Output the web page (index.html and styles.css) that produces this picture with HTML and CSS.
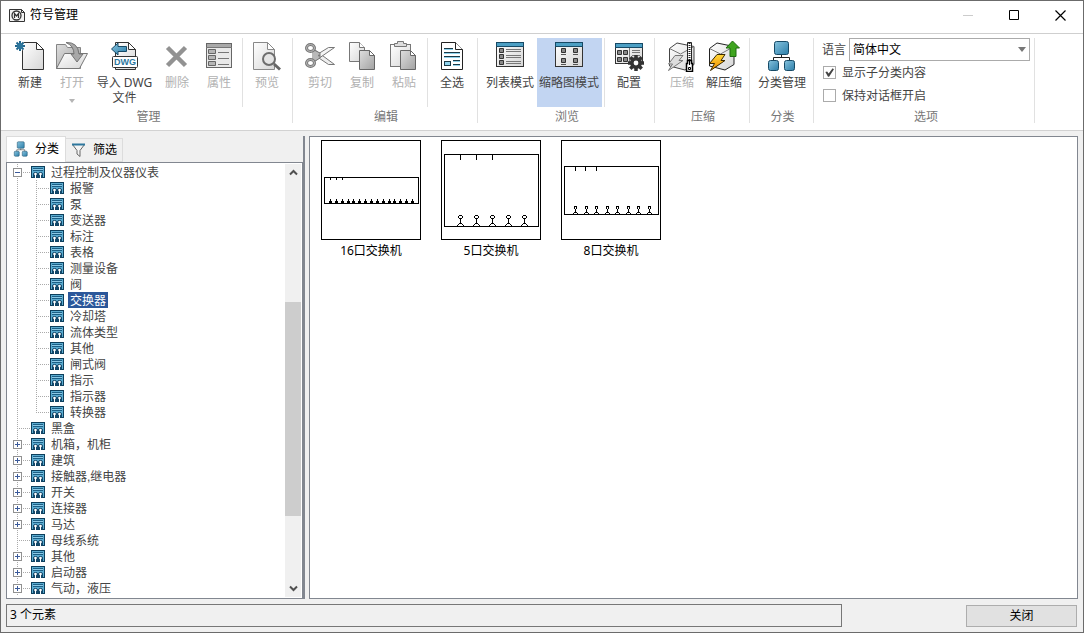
FILE: index.html
```html
<!DOCTYPE html>
<html lang="zh-CN">
<head>
    <meta charset="UTF-8">
    <meta name="viewport" content="width=device-width, initial-scale=1.0">
    <title>符号管理</title>
    <link rel="stylesheet" href="styles.css">
</head>
<body>
    <!-- shared gradients and symbols -->
    <svg class="defs" width="0" height="0" aria-hidden="true">
        <defs>
            <linearGradient id="paper" x1="0" y1="0" x2="1" y2="1">
                <stop offset="0" stop-color="#ffffff"/>
                <stop offset="1" stop-color="#d6d6d6"/>
            </linearGradient>
            <linearGradient id="gray" x1="0" y1="0" x2="1" y2="1">
                <stop offset="0" stop-color="#dedede"/>
                <stop offset="1" stop-color="#a2a2a2"/>
            </linearGradient>
            <linearGradient id="blue" x1="0" y1="0" x2="1" y2="1">
                <stop offset="0" stop-color="#86c3de"/>
                <stop offset="1" stop-color="#2c7ea9"/>
            </linearGradient>
            <linearGradient id="bolt" x1="0" y1="0" x2="0" y2="1">
                <stop offset="0" stop-color="#ffd83a"/>
                <stop offset="1" stop-color="#f08a00"/>
            </linearGradient>
        </defs>
        <symbol id="cat" viewBox="0 0 14 12">
            <rect x="0.5" y="0.5" width="13" height="11" fill="#5aabd0" stroke="#0e3f5c"/>
            <path d="M2 2.500h10M2 4.500h10" stroke="#1c5f85"/>
            <path d="M2 3.500h10" stroke="#8cc9e6"/>
            <path d="M2 11.500V7.500L3.500 6h2L7 7.500 8.500 6h2L12 7.500v4z" fill="#12486a"/>
            <path d="M4.500 8v4M9.500 8v4" stroke="#fff"/>
            <circle cx="4.500" cy="8" r="1.300" fill="#fff"/>
            <circle cx="9.500" cy="8" r="1.300" fill="#fff"/>
        </symbol>
        <symbol id="nodes" viewBox="0 0 32 32">
            <path d="M15.500 15v3M7.500 21v-3.500h16V21" fill="none" stroke="#222"/>
            <rect x="8.500" y="1.500" width="14" height="13" rx="2" fill="url(#blue)" stroke="#174a66"/>
            <rect x="2.500" y="20.500" width="10" height="10" rx="2" fill="url(#blue)" stroke="#174a66"/>
            <rect x="18.500" y="20.500" width="10" height="10" rx="2" fill="url(#blue)" stroke="#174a66"/>
        </symbol>
        <symbol id="port" viewBox="0 0 8 11" overflow="visible">
            <path d="M2 0.500h3M1.500 1v2M5.500 1v2M2 3.500h3M3.500 4v4M2 8.500h3M1.500 9v1M5.500 9v1M0.500 10v1M6.500 10v1" fill="none" stroke="#000"/>
        </symbol>
        <symbol id="port-mid" viewBox="0 0 6 8" overflow="visible">
            <path d="M1 0.500h3M1.500 1v2M3.500 1v2M2.500 3v3M1 6.500h3M0.500 7v1M4.500 7v1" fill="none" stroke="#000"/>
        </symbol>
        <symbol id="port-small" viewBox="0 0 4 4" overflow="visible">
            <path d="M1 0.500h1M0 2.500h3M0 3.500h3M1.500 0v4" fill="none" stroke="#000"/>
        </symbol>
    </svg>

    <header class="titlebar">
        <svg class="app-icon" width="16" height="13" viewBox="0 0 16 13">
            <path d="M0.500 0.500h12l3 3v9h-15z" fill="#f2f2f2" stroke="#333"/>
            <path d="M12.500 0.500v3h3" fill="none" stroke="#333"/>
            <circle cx="7.500" cy="6.500" r="4.500" fill="#fff" stroke="#333" stroke-width="1.300"/>
            <path d="M5.500 9V4.500l2 2.500 2-2.500V9" fill="none" stroke="#333" stroke-width="1.300"/>
        </svg>
        <h1>符号管理</h1>
        <button class="win-btn" aria-label="最小化" disabled>
            <svg width="11" height="11"><path d="M0 5.500h10" stroke="#ccc"/></svg>
        </button>
        <button class="win-btn" aria-label="最大化">
            <svg width="11" height="11"><path d="M0.500 0.500h9v9h-9z" fill="none" stroke="#000"/></svg>
        </button>
        <button class="win-btn" aria-label="关闭窗口">
            <svg width="11" height="11"><path d="M0.500 0.500l10 10M10.500 0.500l-10 10" stroke="#000" stroke-width="1.200"/></svg>
        </button>
    </header>

    <nav class="ribbon">
        <section class="group">
            <div class="tools">
                <button class="tool">
                    <svg width="32" height="32">
                        <path d="M8.500 2.500h14l7 7v20h-21z" fill="url(#paper)" stroke="#333"/>
                        <path d="M22.500 2.500v7h7z" fill="#fff" stroke="#333"/>
                        <circle cx="6" cy="6" r="5" fill="#fff"/>
                        <path d="M6 1v10M1 6h10M2.500 2.500l7 7M9.500 2.500l-7 7" stroke="#24688e" stroke-width="2"/>
                        <circle cx="6" cy="6" r="3" fill="#2c769d"/>
                    </svg>
                    <span>新建</span>
                </button>
                <button class="tool" disabled>
                    <svg width="32" height="32">
                        <path d="M0.500 28.500V4.500h9l2 3h13v21z" fill="url(#gray)" stroke="#858585"/>
                        <path d="M0.500 28.500l8-15h23l-8 15z" fill="url(#paper)" stroke="#777"/>
                        <path d="M10 2.500Q22 2 23 14h4l-6 8-6-8h3Q18 6 10 2.500z" fill="#a8a8a8" stroke="#747474"/>
                    </svg>
                    <span>打开</span>
                    <svg class="more" width="6" height="4"><path d="M0 0h6L3 4z" fill="#b5b5b5"/></svg>
                </button>
                <button class="tool wide">
                    <svg width="32" height="32">
                        <path d="M6.500 29.500v-27h13l7 7v20z" fill="url(#paper)" stroke="#333"/>
                        <path d="M19.500 2.500v7h7z" fill="#fff" stroke="#333"/>
                        <path d="M2.500 9L9 3v3.500h8.500v5H9V15z" fill="url(#blue)" stroke="#174a66"/>
                        <rect x="3.500" y="16.500" width="25" height="11" rx="1" fill="#fff" stroke="#333"/>
                        <text class="icon-text" x="16" y="25" text-anchor="middle">DWG</text>
                    </svg>
                    <span>导入 DWG<br>文件</span>
                </button>
                <button class="tool" disabled>
                    <svg width="32" height="32">
                        <path d="M6.500 7.500l18 18M24.500 7.500l-18 18" stroke="#929292" stroke-width="4.500"/>
                    </svg>
                    <span>删除</span>
                </button>
                <button class="tool" disabled>
                    <svg width="32" height="32">
                        <rect x="3.500" y="3.500" width="25" height="24" fill="#e9e9e9" stroke="#666"/>
                        <rect x="4" y="4" width="24" height="3" fill="#a9a9a9"/>
                        <path d="M3 7.500h26M15 12.500h11M15 18.500h11M15 24.500h11" stroke="#777"/>
                        <path d="M5.500 9.500h7v4h-7zM5.500 15.500h7v4h-7zM5.500 21.500h7v4h-7z" fill="#b5b5b5" stroke="#666"/>
                    </svg>
                    <span>属性</span>
                </button>
                <span class="sep"></span>
                <button class="tool" disabled>
                    <svg width="32" height="32">
                        <path d="M2.500 2.500h14l7 7v20h-21z" fill="url(#paper)" stroke="#888"/>
                        <path d="M16.500 2.500v7h7z" fill="#fff" stroke="#888"/>
                        <path d="M23 24l6 5.500" stroke="#666" stroke-width="3"/>
                        <circle cx="18" cy="19" r="6" fill="#e4e4e4" stroke="#6d6d6d" stroke-width="2"/>
                    </svg>
                    <span>预览</span>
                </button>
            </div>
            <h2>管理</h2>
        </section>

        <section class="group">
            <div class="tools">
                <button class="tool" disabled>
                    <svg width="32" height="32">
                        <path d="M11 10L30.500 24.500h-6L9 14z" fill="#eee" stroke="#777"/>
                        <path d="M11 21L30.500 7.500h-6L9 17z" fill="#f5f5f5" stroke="#777"/>
                        <path d="M8 9l8 4v5l-8 5" fill="#b9b9b9" stroke="#777"/>
                        <ellipse cx="6.500" cy="8" rx="4" ry="3.500" fill="#fff" stroke="#777" stroke-width="3"/>
                        <ellipse cx="6.500" cy="8" rx="4" ry="3.500" fill="none" stroke="#bbb"/>
                        <ellipse cx="6.500" cy="23" rx="4" ry="3.500" fill="#fff" stroke="#777" stroke-width="3"/>
                        <ellipse cx="6.500" cy="23" rx="4" ry="3.500" fill="none" stroke="#bbb"/>
                        <circle cx="15" cy="15.500" r="1" fill="#777"/>
                    </svg>
                    <span>剪切</span>
                </button>
                <button class="tool" disabled>
                    <svg width="32" height="32">
                        <path d="M3.500 2.500h10l5 5v14h-15z" fill="url(#paper)" stroke="#777"/>
                        <path d="M13.500 2.500v5h5" fill="#fff" stroke="#777"/>
                        <path d="M13.500 10.500h10l5 5v14h-15z" fill="url(#gray)" stroke="#666"/>
                        <path d="M23.500 10.500v5h5z" fill="#fff" stroke="#666"/>
                    </svg>
                    <span>复制</span>
                </button>
                <button class="tool" disabled>
                    <svg width="32" height="32">
                        <rect x="2.500" y="4.500" width="20" height="22" fill="url(#paper)" stroke="#777"/>
                        <path d="M6.500 6.500v-3h3v-2h6v2h3v3z" fill="#ddd" stroke="#777"/>
                        <path d="M12.500 10.500h10l5 5v14h-15z" fill="url(#gray)" stroke="#666"/>
                        <path d="M22.500 10.500v5h5z" fill="#fff" stroke="#666"/>
                    </svg>
                    <span>粘贴</span>
                </button>
                <span class="sep"></span>
                <button class="tool">
                    <svg width="32" height="32">
                        <path d="M5.500 2.500h14l7 7v20h-21z" fill="#fff" stroke="#222"/>
                        <path d="M19.500 2.500v7h7" fill="#fff" stroke="#222"/>
                        <path d="M8 8.500h9M8 12.500h16M8 16.500h16M17 20.500h7M17 24.500h7" stroke="#1b3946"/>
                        <path d="M8 9.500h9M8 13.500h16M8 17.500h16M17 21.500h7M17 25.500h7" stroke="#8ed1eb"/>
                        <rect x="8.500" y="21.500" width="6" height="4" fill="#8ed1eb" stroke="#1b3946"/>
                    </svg>
                    <span>全选</span>
                </button>
            </div>
            <h2>编辑</h2>
        </section>

        <section class="group">
            <div class="tools">
                <button class="tool fit">
                    <svg width="32" height="32">
                        <rect x="2.500" y="2.500" width="27" height="24" fill="url(#paper)" stroke="#333"/>
                        <rect x="2.500" y="2.500" width="27" height="4" fill="#4c9fc4" stroke="#174a66"/>
                        <path d="M5.500 8.500h4v4h-4zM5.500 14.500h4v4h-4zM5.500 20.500h4v4h-4z" fill="#888" stroke="#333"/>
                        <path d="M12 9.500h15M12 11.500h15M12 15.500h15M12 17.500h15M12 21.500h15M12 23.500h15" stroke="#777"/>
                    </svg>
                    <span>列表模式</span>
                </button>
                <button class="tool fit active" aria-pressed="true">
                    <svg width="32" height="32">
                        <rect x="2.500" y="2.500" width="27" height="24" fill="url(#paper)" stroke="#333"/>
                        <rect x="2.500" y="2.500" width="27" height="4" fill="#4c9fc4" stroke="#174a66"/>
                        <path d="M8.500 8.500h4v4h-4zM20.500 8.500h4v4h-4zM8.500 18.500h4v4h-4zM20.500 18.500h4v4h-4z" fill="#888" stroke="#333"/>
                        <path d="M8 14.500h5M20 14.500h5M8 24.500h5M20 24.500h5" stroke="#555"/>
                    </svg>
                    <span>缩略图模式</span>
                </button>
                <span class="sep"></span>
                <button class="tool">
                    <svg width="32" height="32">
                        <rect x="2.500" y="3.500" width="27" height="20" fill="url(#paper)" stroke="#333"/>
                        <rect x="2.500" y="3.500" width="27" height="4" fill="#4c9fc4" stroke="#174a66"/>
                        <path d="M4.500 10.500h4v4h-4zM10.500 10.500h4v4h-4zM4.500 17.500h4v4h-4zM10.500 17.500h4v4h-4z" fill="#888" stroke="#333"/>
                        <path d="M16.500 8v15M19 10.500h8M19 12.500h8M19 15.500h8" stroke="#777"/>
                        <path d="M23 15v16M15 23h16M17.300 17.300l11.400 11.400M28.700 17.300L17.300 28.700" stroke="#333" stroke-width="3.500"/>
                        <circle cx="23" cy="23" r="4.200" fill="#fff" stroke="#333" stroke-width="3.600"/>
                    </svg>
                    <span>配置</span>
                </button>
            </div>
            <h2>浏览</h2>
        </section>

        <section class="group">
            <div class="tools">
                <button class="tool" disabled>
                    <svg width="32" height="32">
                        <path d="M3.500 8.500L11 3l17 3.500v18L19 30 3.500 26z" fill="url(#paper)" stroke="#444"/>
                        <path d="M3.500 8.500l11 5.500L28 6.500" fill="none" stroke="#777"/>
                        <path d="M9 15.500h8l-4 5h4L2.500 30.500l4-6.500H2.500z" fill="#ddd" stroke="#777"/>
                        <path d="M21.500 2.500h4v18h-4z" fill="#fff" stroke="#222"/>
                        <path d="M23.500 3v17" stroke="#222" stroke-width="2" stroke-dasharray="1 1"/>
                        <path d="M21.500 20.500h4v3h1v8h-6v-8h1z" fill="#fff" stroke="#000" stroke-width="1.500"/>
                        <path d="M23.500 21v4M22.500 27.500h2v2h-2z" fill="none" stroke="#000"/>
                    </svg>
                    <span>压缩</span>
                </button>
                <button class="tool">
                    <svg width="32" height="32">
                        <path d="M1.500 8.500L9 3l17 3.500v18L17 30 1.500 26z" fill="url(#paper)" stroke="#222"/>
                        <path d="M1.500 8.500l11 5.500L26 6.500" fill="none" stroke="#777"/>
                        <path d="M9 14.500h8l-4 6h4L2.500 30.500l4-7H1.500z" fill="url(#bolt)" stroke="#3a2a00"/>
                        <path d="M24.500 1l7 7h-3.500v8.500h-6V8h-4z" fill="#3fa51f" stroke="#1f6b10"/>
                    </svg>
                    <span>解压缩</span>
                </button>
            </div>
            <h2>压缩</h2>
        </section>

        <section class="group">
            <div class="tools">
                <button class="tool fit">
                    <svg width="32" height="32"><use href="#nodes"/></svg>
                    <span>分类管理</span>
                </button>
            </div>
            <h2>分类</h2>
        </section>

        <section class="group options">
            <div class="fields">
                <div class="field">
                    <label for="lang">语言</label>
                    <span class="combo">
                        <select id="lang">
                            <option>简体中文</option>
                        </select>
                        <svg width="8" height="5"><path d="M0 0h8L4 5z" fill="#777"/></svg>
                    </span>
                </div>
                <div class="field">
                    <input type="checkbox" id="show-sub" checked>
                    <label for="show-sub">显示子分类内容</label>
                </div>
                <div class="field">
                    <input type="checkbox" id="keep-open">
                    <label for="keep-open">保持对话框开启</label>
                </div>
            </div>
            <h2>选项</h2>
        </section>
    </nav>

    <main class="content">
        <aside class="sidebar">
            <div class="tabs" role="tablist">
                <button class="tab active" role="tab" aria-selected="true">
                    <svg width="16" height="16"><use href="#nodes"/></svg>
                    <span>分类</span>
                </button>
                <button class="tab" role="tab" aria-selected="false">
                    <svg width="16" height="16">
                        <path d="M1.500 2.500h12l-4.500 6v6l-3-2.500V8.500z" fill="#f4f4f4" stroke="#666"/>
                        <path d="M1 2.500h13" stroke="#2c769d" stroke-width="2"/>
                    </svg>
                    <span>筛选</span>
                </button>
            </div>
            <div class="tree-box">
                <ul class="tree" id="tree" role="tree"></ul>
                <div class="scrollbar">
                    <button aria-label="向上滚动"><svg width="9" height="7"><path d="M1 5.500l3.500-3.500L8 5.500" fill="none" stroke="#505050" stroke-width="2"/></svg></button>
                    <div class="track"><div class="thumb"></div></div>
                    <button aria-label="向下滚动"><svg width="9" height="7"><path d="M1 1.500L4.500 5 8 1.500" fill="none" stroke="#505050" stroke-width="2"/></svg></button>
                </div>
            </div>
        </aside>

        <section class="gallery">
            <figure>
                <svg width="100" height="100" id="thumb-16"></svg>
                <figcaption>16口交换机</figcaption>
            </figure>
            <figure>
                <svg width="100" height="100" id="thumb-5"></svg>
                <figcaption>5口交换机</figcaption>
            </figure>
            <figure>
                <svg width="100" height="100" id="thumb-8"></svg>
                <figcaption>8口交换机</figcaption>
            </figure>
        </section>
    </main>

    <footer class="footer">
        <div class="status">3 个元素</div>
        <button class="close">关闭</button>
    </footer>

    <script src="script.js"></script>
</body>
</html>
```

FILE: styles.css
```css
* {
    box-sizing: border-box;
}
body {
    margin: 0;
    height: 100vh;
    display: flex;
    flex-direction: column;
    border: 1px solid #6b6b6b;
    background: #f0f0f0;
    color: #444;
    font-family: "Noto Sans", "Noto Sans CJK SC", sans-serif;
    font-size: 12px;
    line-height: 16px;
    overflow: hidden;
}
h1, h2, ul, figure {
    margin: 0;
    padding: 0;
    font-size: 12px;
    font-weight: normal;
}
button, select, input {
    margin: 0;
    padding: 0;
    border: none;
    background: none;
    color: inherit;
    font: inherit;
}
svg {
    display: block;
    flex: none;
}
.defs {
    position: absolute;
}

/* title bar */
.titlebar {
    display: flex;
    align-items: center;
    height: 33px;
    padding-left: 8px;
    padding-bottom: 4px;
    background: #fff;
    border-bottom: 1px solid #cfcfcf;
}
.titlebar h1 {
    flex: 1;
    padding-left: 5px;
    color: #000;
}
.win-btn {
    display: flex;
    justify-content: center;
    width: 46px;
}

/* ribbon */
.ribbon {
    display: flex;
    flex: none;
    height: 97px;
    padding: 4px 0 7px 2px;
    background: #fff;
    border-bottom: 1px solid #d2d2d2;
}
.group {
    display: flex;
    flex-direction: column;
    padding: 0 4px 0 6px;
    border-right: 1px solid #e1e1e1;
}
.group h2 {
    padding-top: 4px;
    line-height: 12px;
    text-align: center;
    color: #777;
}
.tools {
    display: flex;
    flex: none;
    height: 69px;
}
.tool {
    display: flex;
    flex-direction: column;
    align-items: center;
    width: 42px;
    padding-top: 2px;
    line-height: 15px;
    white-space: nowrap;
}
.tool span {
    padding-top: 3px;
}
.tool:disabled {
    color: #b1b1b1;
}
.tool.wide {
    width: 63px;
}
.tool.fit {
    width: auto;
    padding-left: 2px;
    padding-right: 3px;
}
.tool.active {
    background: #c2d5f2;
}
.more {
    margin-top: 9px;
}
.icon-text {
    font-family: "Liberation Sans", sans-serif;
    font-size: 9px;
    font-weight: bold;
    fill: #2c769d;
}
.sep {
    width: 1px;
    margin: 0 3px 0 2px;
    background: #e1e1e1;
}
.options {
    padding-left: 8px;
}
.fields {
    flex: none;
    height: 69px;
}
.field {
    display: flex;
    align-items: center;
    height: 23px;
}
.combo {
    display: grid;
    align-items: center;
    margin-left: 3px;
}
.combo select,
.combo svg {
    grid-area: 1 / 1;
}
.combo svg {
    justify-self: end;
    margin-right: 4px;
    pointer-events: none;
}
select {
    appearance: none;
    width: 181px;
    height: 23px;
    padding-left: 3px;
    border: 1px solid #ababab;
    background: #fff;
    color: #000;
}
input[type="checkbox"] {
    appearance: none;
    width: 13px;
    height: 13px;
    margin: 0 6px 0 1px;
    border: 1px solid #ababab;
    background: #fff;
}
input[type="checkbox"]:checked::before {
    content: "";
    display: block;
    width: 11px;
    height: 11px;
    background: #444;
    clip-path: polygon(12% 45%, 28% 40%, 42% 60%, 78% 12%, 90% 20%, 46% 88%, 36% 88%);
}

/* main area */
.content {
    display: flex;
    flex: 1;
    gap: 4px;
    min-height: 0;
    padding: 5px 5px 0 5px;
}
.sidebar {
    display: flex;
    flex-direction: column;
    width: 299px;
    border-right: 2px solid #828790;
}
.tabs {
    display: flex;
    align-items: flex-end;
    height: 26px;
}
.tab {
    display: flex;
    align-items: center;
    gap: 6px;
    height: 24px;
    padding: 0 5px 1px 5px;
    border: 1px solid #dcdcdc;
    border-left: none;
    color: #000;
}
.tab.active {
    height: 26px;
    padding: 0 6px 1px 6px;
    border-left: 1px solid #dcdcdc;
    border-bottom: none;
    background: #fff;
}
.tree-box {
    display: flex;
    flex: 1;
    min-height: 0;
    padding: 1px;
    border: 1px solid #828790;
    background: #fff;
}
.tree {
    flex: 1;
    padding-left: 4px;
    overflow: hidden;
    list-style: none;
    font-family: "Liberation Sans", "Noto Sans CJK SC", sans-serif;
}
.row {
    display: flex;
    align-items: center;
    height: 16px;
    white-space: nowrap;
}
.name {
    margin-left: 4px;
    padding: 2px 2px 0 2px;
    line-height: 14px;
}
.row.selected .name {
    background: #2b579a;
    color: #fff;
}
/* 19px wide cells that carry the dotted guides */
.guide {
    display: flex;
    align-items: center;
    width: 19px;
    height: 16px;
    background-repeat: no-repeat;
    background-image: repeating-linear-gradient(to bottom, #aaa 0 1px, transparent 1px 2px);
    background-size: 1px 16px;
    background-position: 5px 0;
}
.guide.tee,
.guide.end {
    background-image:
        repeating-linear-gradient(to bottom, #aaa 0 1px, transparent 1px 2px),
        repeating-linear-gradient(to right, #aaa 0 1px, transparent 1px 2px);
    background-size: 1px 16px, 13px 1px;
    background-position: 5px 0, 5px 8px;
}
.guide.end {
    background-size: 1px 8px, 13px 1px;
}
.toggle {
    width: 9px;
    height: 9px;
    margin-left: 1px;
    background: #fff;
}
.scrollbar {
    display: flex;
    flex-direction: column;
    width: 16px;
    background: #f0f0f0;
}
.scrollbar button {
    display: flex;
    align-items: center;
    justify-content: center;
    height: 17px;
}
.track {
    display: flex;
    flex: 1;
    flex-direction: column;
    justify-content: flex-end;
    padding-bottom: 64px;
}
.thumb {
    height: 64%;
    background: #cdcdcd;
}

/* symbol gallery */
.gallery {
    display: flex;
    flex: 1;
    flex-wrap: wrap;
    align-content: flex-start;
    gap: 20px;
    padding: 3px 11px;
    border: 1px solid #828790;
    background: #fff;
}
figcaption {
    padding-top: 3px;
    text-align: center;
    color: #000;
}
.gallery svg {
    shape-rendering: crispEdges;
}

/* footer */
.footer {
    display: flex;
    gap: 124px;
    padding: 5px 6px 5px 5px;
    color: #000;
}
.status {
    flex: 1;
    height: 23px;
    padding: 2px 3px;
    border: 1px solid #777;
}
.close {
    width: 111px;
    height: 22px;
    margin-top: 1px;
    border: 1px solid #adadad;
    background: #e1e1e1;
}
```

FILE: script.js
```js
const categories = [
    {
        name: '过程控制及仪器仪表',
        state: 'open',
        children: ['报警', '泵', '变送器', '标注', '表格', '测量设备', '阀', '交换器', '冷却塔',
            '流体类型', '其他', '闸式阀', '指示', '指示器', '转换器']
    },
    { name: '黑盒', state: 'leaf' },
    { name: '机箱，机柜', state: 'closed' },
    { name: '建筑', state: 'closed' },
    { name: '接触器,继电器', state: 'closed' },
    { name: '开关', state: 'closed' },
    { name: '连接器', state: 'closed' },
    { name: '马达', state: 'closed' },
    { name: '母线系统', state: 'leaf' },
    { name: '其他', state: 'closed' },
    { name: '启动器', state: 'closed' },
    { name: '气动，液压', state: 'closed' }
];
const selected = '交换器';

const icon = '<svg width="14" height="12"><use href="#cat"/></svg>';

function toggleButton(item) {
    if (item.state === 'leaf') {
        return '';
    }
    const sign = item.state === 'open' ? 'M2 4.5h5' : 'M2 4.5h5M4.5 2v5';
    return `<button class="toggle" aria-label="${item.name}">
        <svg width="9" height="9"><rect x="0.5" y="0.5" width="8" height="8" fill="#fff" stroke="#919191"/><path d="${sign}" stroke="#3b5a9a"/></svg>
    </button>`;
}

function showTree() {
    let html = '';
    for (let item of categories) {
        html += `<li class="row" role="treeitem"><span class="guide tee">${toggleButton(item)}</span>${icon}<span class="name">${item.name}</span></li>`;

        const children = item.children || [];
        children.forEach((child, i) => {
            const end = i === children.length - 1 ? 'end' : 'tee';
            const cls = child === selected ? 'row selected' : 'row';
            html += `<li class="${cls}" role="treeitem"><span class="guide"></span><span class="guide ${end}"></span>${icon}<span class="name">${child}</span></li>`;
        });
    }
    document.getElementById('tree').innerHTML = html;
}

// switch symbol: outer frame, device box, three ticks on top, ports below
function drawSwitch(id, top, bottom, ticks, tickLength, ports, port, w, h) {
    let svg = '<rect x="0.5" y="0.5" width="99" height="99" fill="#fff" stroke="#000"/>';
    svg += `<rect x="3.5" y="${top + 0.5}" width="94" height="${bottom - top}" fill="none" stroke="#000"/>`;
    for (let x of ticks) {
        svg += `<path d="M${x + 0.5} ${top}v${tickLength}" stroke="#000"/>`;
    }
    for (let i = 0; i < ports.count; i++) {
        const x = Math.round(ports.start + i * ports.step) - Math.floor(w / 2) + 1;
        svg += `<use href="#${port}" x="${x}" y="${bottom - h}" width="${w}" height="${h}"/>`;
    }
    document.getElementById(id).innerHTML = svg;
}

showTree();
drawSwitch('thumb-16', 37, 63, [9, 15, 21], 3, { start: 9, step: 5.86, count: 15 }, 'port-small', 4, 4);
drawSwitch('thumb-5', 14, 86, [19, 35, 51], 6, { start: 19, step: 16, count: 5 }, 'port', 8, 11);
drawSwitch('thumb-8', 26, 74, [14, 24, 35], 5, { start: 14, step: 10.5, count: 8 }, 'port-mid', 6, 8);
```
